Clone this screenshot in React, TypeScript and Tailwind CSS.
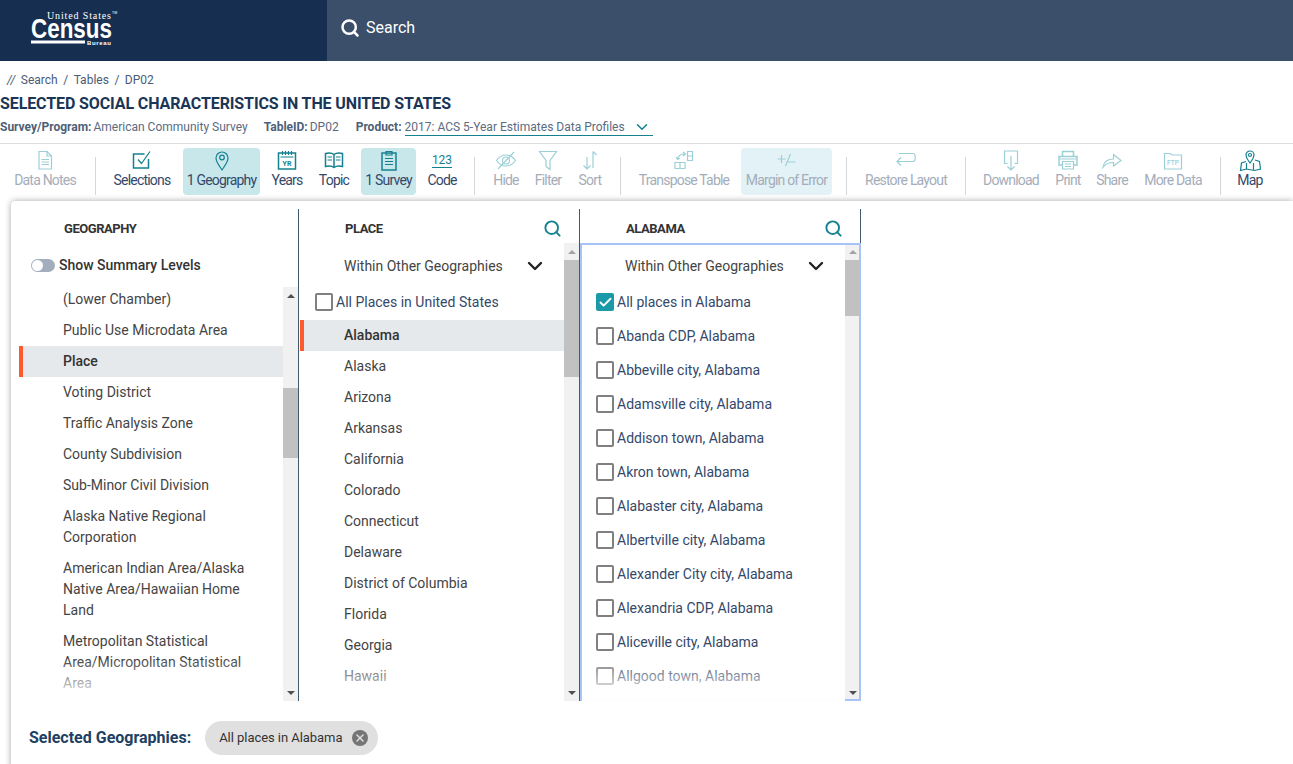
import { Search, ChevronDown, Check, X } from "lucide-react";

// Census table page with the geography filter panel open

const geographyRows = [
  "(Lower Chamber)",
  "Public Use Microdata Area",
  "Place",
  "Voting District",
  "Traffic Analysis Zone",
  "County Subdivision",
  "Sub-Minor Civil Division",
  "Alaska Native Regional Corporation",
  "American Indian Area/Alaska Native Area/Hawaiian Home Land",
  "Metropolitan Statistical Area/Micropolitan Statistical Area",
];

const stateRows = [
  "Alabama",
  "Alaska",
  "Arizona",
  "Arkansas",
  "California",
  "Colorado",
  "Connecticut",
  "Delaware",
  "District of Columbia",
  "Florida",
  "Georgia",
  "Hawaii",
];

const placeRows = [
  "All places in Alabama",
  "Abanda CDP, Alabama",
  "Abbeville city, Alabama",
  "Adamsville city, Alabama",
  "Addison town, Alabama",
  "Akron town, Alabama",
  "Alabaster city, Alabama",
  "Albertville city, Alabama",
  "Alexander City city, Alabama",
  "Alexandria CDP, Alabama",
  "Aliceville city, Alabama",
  "Allgood town, Alabama",
];

function Icon({ children }: { children: React.ReactNode }) {
  return (
    <svg viewBox="0 0 24 24" width={24} height={24} fill="none" stroke="currentColor" strokeWidth={1.2}>
      {children}
    </svg>
  );
}

const icons: Record<string, React.ReactNode> = {
  notes: (
    <Icon>
      <path d="M6 3.500h8l4.500 4.500v13H6z" />
      <path d="M14 3.500V8h4.500M8.500 11.500h7.500M8.500 14h7.500M8.500 16.500h7.500" />
    </Icon>
  ),
  selections: (
    <Icon>
      <path d="M18.500 11v9H3.500V6h11" strokeWidth={1.500} />
      <path d="M8 11.500l3.500 4L20 3.500" />
    </Icon>
  ),
  pin: (
    <Icon>
      <path d="M12 22c-3-4.500-6-8-6-12a6 6 0 0 1 12 0c0 4-3 7.500-6 12z" />
      <circle cx="12" cy="9.500" r="2.300" />
    </Icon>
  ),
  years: (
    <Icon>
      <rect x="3.500" y="5" width="17" height="16" strokeWidth={1.500} />
      <path d="M7.500 3v4M10.500 3v4M13.500 3v4M16.500 3v4M5.500 9h13" />
      <text x="12" y="17.500" textAnchor="middle" fontSize="7" fontWeight="700" stroke="none" fill="currentColor" fontFamily="Roboto, sans-serif">
        YR
      </text>
    </Icon>
  ),
  topic: (
    <Icon>
      <path d="M12 6.500C10 5 6 5 3.500 5.500v13c2.500-.5 6.500-.5 8.500 1 2-1.500 6-1.500 8.500-1v-13C18 5 14 5 12 6.500zM12 6.500v13" strokeWidth={1.500} />
      <path d="M5.500 9h4.500M5.500 12h4.500M14 9h4.500M14 12h4.500" />
    </Icon>
  ),
  survey: (
    <Icon>
      <rect x="5" y="5" width="14" height="17" strokeWidth={1.500} />
      <path d="M9 3.500h6V7H9zM8 10.500h8M8 13.500h8M8 16.500h8" />
    </Icon>
  ),
  hide: (
    <Icon>
      <path d="M2.500 12.500C5 9 8 7 12 7s7 2 9.500 5.500C19 16 16 18 12 18s-7-2-9.500-5.500z" />
      <circle cx="12" cy="12.500" r="3.500" />
      <path d="M4 21L20 4" />
    </Icon>
  ),
  filter: (
    <Icon>
      <path d="M3.500 3.500h17l-6.500 9v9l-4-3v-6z" />
    </Icon>
  ),
  sort: (
    <Icon>
      <path d="M9 9v12M5.500 17.500L9 21l3.500-3.500" />
      <path d="M15 20V3.500M15 3.500l3.500 3.500" />
    </Icon>
  ),
  transpose: (
    <Icon>
      <path d="M15.500 3.500h5v9h-5zM15.500 8h5M3 14.500h10v6H3zM8 14.500v6" />
      <path d="M5.500 11c.5-3 3-5 7.500-5M11 4l2.500 2L11 8M4 9l1.500 2.500L8 10" />
    </Icon>
  ),
  margin: (
    <Icon>
      <path d="M2.500 11h8M6.500 7v8M10.500 18L15.500 6M12.500 14h8" />
    </Icon>
  ),
  restore: (
    <Icon>
      <path d="M5 5.500h14c3 0 3 8 0 8H3M7 9.500l-4 4 4 4" />
    </Icon>
  ),
  download: (
    <Icon>
      <path d="M8.500 15.500H5.500V3h13v12.500h-3" />
      <path d="M12 8v14M8.500 18.500L12 22l3.500-3.500" />
    </Icon>
  ),
  print: (
    <Icon>
      <path d="M6.500 8V3.500h11V8M6.500 17H3V8.500h18V17h-3.500" strokeWidth={1.500} />
      <path d="M6.500 13.500h11V21h-11zM9 16h6M9 18.500h6M3.500 11h17" />
    </Icon>
  ),
  share: (
    <Icon>
      <path d="M3 19c1-5.500 5-8 10.500-8V6.500L21 12.500 13.500 18v-3.500C9 14.500 5.500 16 3 19z" />
    </Icon>
  ),
  ftp: (
    <Icon>
      <path d="M3.500 5.500h6l1.500 1.500h9.500v14h-17z" />
      <text x="12" y="17" textAnchor="middle" fontSize="6.500" fontWeight="500" stroke="none" fill="currentColor" fontFamily="Roboto, sans-serif">
        FTP
      </text>
    </Icon>
  ),
  map: (
    <Icon>
      <path d="M8 13.500l-4.500 1.500-1 7.500 6-1.500 8 1.500 6-1.500-1-7.500-4.500-1.500M8.500 21v-6M15.500 22v-7" />
      <path d="M12 15c-2-3-4-5-4-8a4 4 0 0 1 8 0c0 3-2 5-4 8z" />
      <circle cx="12" cy="7" r="1.500" />
    </Icon>
  ),
};

type Tool = {
  label: string;
  icon?: string;
  code?: boolean;
  width: string;
  margin?: string;
  state?: "on" | "off" | "offOn";
};

function ToolButton({ label, icon, code, width, margin, state }: Tool) {
  const off = state === "off" || state === "offOn";
  return (
    <div
      className={`flex h-[47px] shrink-0 flex-col items-center rounded-[4px] ${width} ${margin ?? ""} ${
        state === "on" ? "bg-[#c8e7eb]" : state === "offOn" ? "bg-[#e3f2f6]" : ""
      }`}
    >
      <div className={`flex h-[24px] shrink-0 items-center justify-center ${off ? "text-[#9bd0d7]" : "text-[#15818f]"}`}>
        {code ? (
          <span className="border-b border-[#15818f] text-[12px] leading-[14px] text-[#15818f]">123</span>
        ) : (
          icons[icon ?? ""]
        )}
      </div>
      <span className={`whitespace-nowrap text-[14px] leading-[16px] tracking-[-0.8px] ${off ? "text-[#a4adba]" : "text-[#34486a]"}`}>
        {label}
      </span>
    </div>
  );
}

function Sep({ margin }: { margin: string }) {
  return <div className={`mt-[9px] h-[38px] w-px shrink-0 bg-[#d3d8dc] ${margin}`} />;
}

function Box({ checked }: { checked?: boolean }) {
  return checked ? (
    <span className="flex h-[18px] w-[18px] shrink-0 items-center justify-center rounded-[2px] bg-[#1a9aa8]">
      <Check size={15} strokeWidth={3} className="text-white" />
    </span>
  ) : (
    <span className="h-[18px] w-[18px] shrink-0 rounded-[2px] border-2 border-[#808080] bg-white" />
  );
}

function Scrollbar({ height, gap, dim }: { height: string; gap?: string; dim?: boolean }) {
  return (
    <div className="flex h-full w-[15px] shrink-0 flex-col bg-[#f1f1f1]">
      <div className="flex h-[17px] shrink-0 items-center justify-center">
        <div className={`h-0 w-0 border-x-[4px] border-b-[4px] border-x-transparent ${dim ? "border-b-[#a3a3a3]" : "border-b-[#505050]"}`} />
      </div>
      <div className={`shrink-0 bg-[#c1c1c1] ${height} ${gap ?? ""}`} />
      <div className="mt-auto flex h-[17px] shrink-0 items-center justify-center">
        <div className="h-0 w-0 border-x-[4px] border-t-[4px] border-x-transparent border-t-[#505050]" />
      </div>
    </div>
  );
}

function ColumnHead({ title }: { title: string }) {
  return (
    <div className="flex h-[34px] items-center justify-between pl-[46px] pr-[17px] pt-[5px]">
      <span className="text-[13px] font-bold leading-[16px] tracking-[-0.45px] text-[#333333]">{title}</span>
      <Search size={19} strokeWidth={2.400} className="text-[#15818f]" />
    </div>
  );
}

function WithinDropdown() {
  return (
    <div className="flex w-[248px] items-center justify-between pl-[45px]">
      <span className="text-[14px] leading-[20px] text-[#444444]">Within Other Geographies</span>
      <ChevronDown size={24} strokeWidth={2.400} className="text-[#222222]" />
    </div>
  );
}

function Fade({ left }: { left: string }) {
  return (
    <div className={`pointer-events-none absolute bottom-0 h-[42px] bg-linear-to-b from-white/0 to-white ${left}`} />
  );
}

export default function App() {
  return (
    <div className="h-[764px] w-full overflow-hidden bg-white font-['Roboto',sans-serif] text-[14px]">
      {/* Top bar */}
      <header className="flex h-[61px]">
        <div className="flex w-[327px] items-start bg-[#162f50] pl-[30px] pt-[9px]">
          <svg width={90} height={40} viewBox="0 0 90 40" fill="white">
            <text x="17" y="10" fontSize="10" fontFamily="'Liberation Serif', serif" textLength="64">
              United States
            </text>
            <text x="82" y="5" fontSize="3.500" fontFamily="'Liberation Sans', sans-serif">
              TM
            </text>
            <text x="1" y="28.500" fontSize="27" fontWeight="700" fontFamily="'Liberation Sans', sans-serif" textLength="81" lengthAdjust="spacingAndGlyphs">
              Census
            </text>
            <rect x="1" y="31.500" width="54" height="3" />
            <text x="57" y="35.500" fontSize="6" fontWeight="700" fontFamily="'Liberation Sans', sans-serif" textLength="24">
              Bureau
            </text>
          </svg>
        </div>
        <div className="flex flex-1 items-center gap-[6px] bg-[#3b4f6b] pb-[5px] pl-[13px] text-white">
          <Search size={20} strokeWidth={3} />
          <span className="text-[16px]">Search</span>
        </div>
      </header>

      {/* Breadcrumb and title */}
      <div className="h-[83px] border-b border-[#dddddd]">
        <div className="flex h-[27px] items-end gap-[5.500px] pl-[7px] text-[12px] leading-[16px] text-[#4a5c78]">
          <span className="italic">//</span>
          <span>Search</span>
          <span>/</span>
          <span>Tables</span>
          <span>/</span>
          <span>DP02</span>
        </div>
        <h1 className="mt-[4px] text-[16px] font-bold leading-[24px] tracking-[-0.11px] text-[#1b3557]">
          SELECTED SOCIAL CHARACTERISTICS IN THE UNITED STATES
        </h1>
        <div className="mt-px flex h-[20px] items-center text-[12px] leading-[16px] text-[#5a6b82]">
          <b className="text-[#4e5f78]">Survey/Program:</b>
          <span className="ml-[2px]">American Community Survey</span>
          <b className="ml-[16px] text-[#4e5f78]">TableID:</b>
          <span className="ml-[2px]">DP02</span>
          <b className="ml-[17px] text-[#4e5f78]">Product:</b>
          <div className="ml-[3px] flex h-[18px] w-[248px] items-center justify-between border-b border-[#15818f] pr-[2px]">
            <span>2017: ACS 5-Year Estimates Data Profiles</span>
            <ChevronDown size={18} strokeWidth={2} className="text-[#15818f]" />
          </div>
        </div>
      </div>

      {/* Toolbar */}
      <div className="flex h-[57px] items-start pt-[4px]">
        <ToolButton label="Data Notes" icon="notes" width="w-[90px]" state="off" />
        <Sep margin="ml-[5px]" />
        <ToolButton label="Selections" icon="selections" width="w-[82px]" margin="ml-[5px]" />
        <ToolButton label="1 Geography" icon="pin" width="w-[77px]" state="on" />
        <ToolButton label="Years" icon="years" width="w-[54px]" />
        <ToolButton label="Topic" icon="topic" width="w-[40px]" />
        <ToolButton label="1 Survey" icon="survey" width="w-[55px]" margin="ml-[7px]" state="on" />
        <ToolButton label="Code" code width="w-[52px]" />
        <Sep margin="ml-[6px]" />
        <ToolButton label="Hide" icon="hide" width="w-[42px]" margin="ml-[10px]" state="off" />
        <ToolButton label="Filter" icon="filter" width="w-[40px]" margin="ml-px" state="off" />
        <ToolButton label="Sort" icon="sort" width="w-[40px]" margin="ml-[2px]" state="off" />
        <Sep margin="ml-[10px]" />
        <ToolButton label="Transpose Table" icon="transpose" width="w-[100px]" margin="ml-[13px]" state="off" />
        <ToolButton label="Margin of Error" icon="margin" width="w-[91px]" margin="ml-[7px]" state="offOn" />
        <Sep margin="ml-[14px]" />
        <ToolButton label="Restore Layout" icon="restore" width="w-[90px]" margin="ml-[14px]" state="off" />
        <Sep margin="ml-[14px]" />
        <ToolButton label="Download" icon="download" width="w-[60px]" margin="ml-[15px]" state="off" />
        <ToolButton label="Print" icon="print" width="w-[40px]" margin="ml-[7px]" state="off" />
        <ToolButton label="Share" icon="share" width="w-[40px]" margin="ml-[4px]" state="off" />
        <ToolButton label="More Data" icon="ftp" width="w-[64px]" margin="ml-[9px]" state="off" />
        <Sep margin="ml-[15px]" />
        <ToolButton label="Map" icon="map" width="w-[40px]" margin="ml-[9px]" />
      </div>

      {/* Geography panel */}
      <div className="ml-[11px] h-[600px] rounded-tl-[4px] bg-white pt-[8px] shadow-[0_0_6px_rgba(0,0,0,0.35)]">
        <div className="flex h-[492px]">
          {/* Geography levels */}
          <div className="flex w-[288px] shrink-0 flex-col border-r border-[#3f5a6e]">
            <div className="flex h-[34px] items-center pl-[53px] pt-[5px]">
              <span className="text-[13px] font-bold leading-[16px] tracking-[-0.45px] text-[#333333]">GEOGRAPHY</span>
            </div>
            <div className="flex h-[44px] items-center gap-[4px] pl-[20px]">
              <div className="flex h-[13px] w-[24px] items-center rounded-full bg-[#a2aebd] pl-px">
                <div className="h-[11px] w-[11px] rounded-full bg-white" />
              </div>
              <span className="text-[14px] font-medium text-[#333333]">Show Summary Levels</span>
            </div>
            <div className="relative flex min-h-0 flex-1 pl-[8px]">
              <div className="min-w-0 flex-1 overflow-hidden">
                <div className="-mt-[3px]">
                  {geographyRows.map((row) => (
                    <div
                      key={row}
                      className={`py-[5px] pr-[30px] leading-[21px] ${
                        row === "Place"
                          ? "border-l-4 border-[#ff5a2b] bg-[#e6e9eb] pl-[40px] font-medium text-[#333333]"
                          : "pl-[44px] text-[#444444]"
                      }`}
                    >
                      {row}
                    </div>
                  ))}
                </div>
              </div>
              <Scrollbar height="h-[70px]" gap="mt-[84px]" />
              <Fade left="left-[8px] right-[15px]" />
            </div>
          </div>

          {/* States */}
          <div className="flex w-[281px] shrink-0 flex-col border-r border-[#3f5a6e]">
            <ColumnHead title="PLACE" />
            <div className="relative flex min-h-0 flex-1">
              <div className="min-w-0 flex-1 overflow-hidden">
                <div className="flex h-[46px] items-center">
                  <WithinDropdown />
                </div>
                <div className="flex h-[31px] items-start gap-[3px] pb-[5px] pl-[16px] pt-[4px] text-[#34486a]">
                  <Box />
                  <span className="leading-[18px]">All Places in United States</span>
                </div>
                <div className="pl-px">
                  {stateRows.map((row) => (
                    <div
                      key={row}
                      className={`h-[31px] leading-[31px] ${
                        row === "Alabama"
                          ? "border-l-4 border-[#ff5a2b] bg-[#e6e9eb] pl-[40px] font-medium text-[#333333]"
                          : "pl-[44px] text-[#444444]"
                      }`}
                    >
                      {row}
                    </div>
                  ))}
                </div>
              </div>
              <Scrollbar height="h-[117px]" dim />
              <Fade left="left-0 right-[15px]" />
            </div>
          </div>

          {/* Places in the state */}
          <div className="flex w-[281px] shrink-0 flex-col border-r border-[#3f5a6e]">
            <ColumnHead title="ALABAMA" />
            <div className="relative flex min-h-0 flex-1">
              <div className="min-w-0 flex-1 overflow-hidden">
                <div className="flex h-[42px] items-center pt-[4px]">
                  <WithinDropdown />
                </div>
                {placeRows.map((row, i) => (
                  <div key={row} className="flex h-[34px] items-center gap-[3px] pl-[16px] text-[#34486a]">
                    <Box checked={i === 0} />
                    <span className="leading-[18px]">{row}</span>
                  </div>
                ))}
              </div>
              <Scrollbar height="h-[56px]" dim />
              {/* focus ring, the fade sits on top of its bottom edge */}
              <div className="pointer-events-none absolute inset-y-0 -right-px left-0 border-2 border-[#a8c3f5]" />
              <Fade left="left-[2px] right-[15px]" />
            </div>
          </div>
        </div>

        {/* Selected chips */}
        <div className="mt-[20px] flex items-center gap-[14px] pl-[18px]">
          <span className="text-[16px] font-bold text-[#223f63]">Selected Geographies:</span>
          <div className="flex h-[34px] items-center gap-[10px] rounded-full bg-[#e0e0e0] pl-[14px] pr-[10px]">
            <span className="text-[13px] tracking-[-0.05px] text-[#333333]">All places in Alabama</span>
            <span className="flex h-[16px] w-[16px] items-center justify-center rounded-full bg-[#757575]">
              <X size={12} strokeWidth={3} className="text-[#e0e0e0]" />
            </span>
          </div>
        </div>
      </div>
    </div>
  );
}
